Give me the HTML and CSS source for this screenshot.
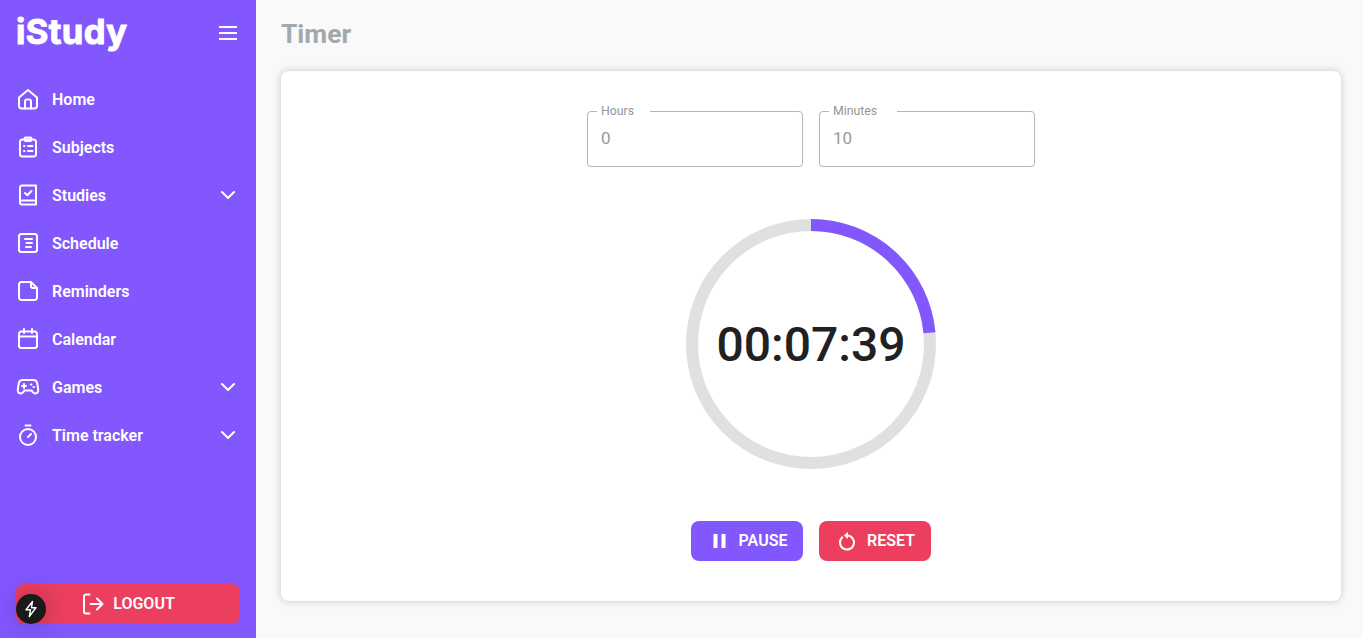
FILE: index.html
```html
<!DOCTYPE html>
<html lang="en">
<head>
    <meta charset="UTF-8">
    <meta name="viewport" content="width=device-width, initial-scale=1.0">
    <title>iStudy - Timer</title>
    <link rel="stylesheet" href="styles.css">
</head>
<body>
    <aside class="sidebar">
        <div class="brand">
            <span class="logo">iStudy</span>
            <button class="menu-btn" aria-label="Menu">
                <svg width="18" height="14" viewBox="0 0 18 14"><path d="M0 1h18M0 7h18M0 13h18"/></svg>
            </button>
        </div>

        <nav class="nav">
            <a class="nav-item">
                <svg class="nav-icon" viewBox="0 0 24 24"><path d="M3 10.500 12 3l9 7.500V19a2.500 2.500 0 0 1-2.500 2.500h-13A2.500 2.500 0 0 1 3 19z"/><path d="M9 21.500V14.500a2 2 0 0 1 2-2h2a2 2 0 0 1 2 2v7"/></svg>
                <span>Home</span>
            </a>
            <a class="nav-item">
                <svg class="nav-icon" viewBox="0 0 24 24"><rect x="4" y="4.500" width="16" height="17" rx="2.500"/><rect x="8.500" y="2.500" width="7" height="3.500" rx="1.200"/><path d="M8 11h.5M12 11h4.500M8 16h.5M12 16h4.500"/></svg>
                <span>Subjects</span>
            </a>
            <a class="nav-item">
                <svg class="nav-icon" viewBox="0 0 24 24"><path d="M4 19V4.500A2 2 0 0 1 6 2.500h14v19H6a2 2 0 0 1-2-2.500zM4 17.500h16"/><path d="m9 10 2.300 2.200L15.500 8"/></svg>
                <span>Studies</span>
                <svg class="chevron" viewBox="0 0 14 8"><path d="m1 1 6 6 6-6"/></svg>
            </a>
            <a class="nav-item">
                <svg class="nav-icon" viewBox="0 0 24 24"><rect x="3" y="3" width="18" height="18" rx="2.500"/><path d="M9 8h7M10.500 12h5.500M10 16h5"/></svg>
                <span>Schedule</span>
            </a>
            <a class="nav-item">
                <svg class="nav-icon" viewBox="0 0 24 24"><path d="M5.500 3H15l6 6v9.500a2.500 2.500 0 0 1-2.500 2.500h-13A2.500 2.500 0 0 1 3 18.500v-13A2.500 2.500 0 0 1 5.500 3z"/><path d="M15 3v4a2 2 0 0 0 2 2h4"/></svg>
                <span>Reminders</span>
            </a>
            <a class="nav-item">
                <svg class="nav-icon" viewBox="0 0 24 24"><rect x="3" y="4.500" width="18" height="16.500" rx="2.500"/><path d="M3 9.500h18M8 2v4M16 2v4"/></svg>
                <span>Calendar</span>
            </a>
            <a class="nav-item">
                <svg class="nav-icon" viewBox="0 0 24 24"><path d="M6.500 5h11c2 0 3.300 1.200 3.700 3.200l1 6.300c.4 2.500-1 4-2.800 4-1.300 0-2-.6-2.800-1.700L15.500 15.500h-7L7.400 16.800C6.600 17.900 5.900 18.500 4.600 18.500c-1.800 0-3.200-1.500-2.800-4l1-6.300C3.200 6.200 4.500 5 6.500 5z"/><path d="M6 11h4M8 9v4M15 9.500h.5M17.500 12h.5"/></svg>
                <span>Games</span>
                <svg class="chevron" viewBox="0 0 14 8"><path d="m1 1 6 6 6-6"/></svg>
            </a>
            <a class="nav-item">
                <svg class="nav-icon" viewBox="0 0 24 24"><circle cx="12" cy="14" r="8"/><path d="M9.500 2.500h5M12 14l3-3"/></svg>
                <span>Time tracker</span>
                <svg class="chevron" viewBox="0 0 14 8"><path d="m1 1 6 6 6-6"/></svg>
            </a>
        </nav>

        <button class="btn btn-logout">
            <svg width="24" height="24" viewBox="0 0 24 24"><path d="M8.500 2.500H5a2 2 0 0 0-2 2v15a2 2 0 0 0 2 2h3.500M9.500 12h12M16 6.500l5.500 5.500-5.500 5.500"/></svg>
            <span class="btn-text">LOGOUT</span>
        </button>
    </aside>

    <main class="content">
        <h1 class="page-title">Timer</h1>
        <section class="card">
            <div class="fields">
                <fieldset class="field">
                    <legend class="field-label label-hours">Hours</legend>
                    <input class="field-input" type="text" value="0">
                </fieldset>
                <fieldset class="field">
                    <legend class="field-label label-minutes">Minutes</legend>
                    <input class="field-input" type="text" value="10">
                </fieldset>
            </div>

            <div class="ring">
                <svg width="250" height="250" viewBox="0 0 250 250">
                    <circle class="ring-track" cx="125" cy="125" r="119"/>
                    <circle class="ring-value" cx="125" cy="125" r="119" pathLength="600" stroke-dasharray="141 459" transform="rotate(-90 125 125)"/>
                </svg>
                <span class="ring-time">00:07:39</span>
            </div>

            <div class="actions">
                <button class="btn btn-pause">
                    <svg width="24" height="24" viewBox="0 0 24 24"><path class="solid" d="M6.500 5h4v14h-4zM14.500 5h4v14h-4z"/></svg>
                    <span class="btn-text">PAUSE</span>
                </button>
                <button class="btn btn-reset">
                    <svg width="24" height="24" viewBox="0 0 24 24"><path d="M7.300 8.300A7 7 0 1 0 12 6.500"/><path class="solid" d="M13 3v7L8.800 6.500z"/></svg>
                    <span class="btn-text">RESET</span>
                </button>
            </div>
        </section>
    </main>

    <!-- floating dev badge -->
    <div class="dev-badge">
        <svg width="18" height="18" viewBox="0 0 18 18"><path d="M10.500 1.500 4 9.800h4.500l-1.200 6.700 6.700-8.800H9.500z"/></svg>
    </div>
</body>
</html>
```

FILE: styles.css
```css
* {
    margin: 0;
    padding: 0;
    box-sizing: border-box;
}
body {
    display: flex;
    height: 100vh;
    overflow: hidden;
    background: #f9f9f9;
    font-family: Roboto, "Liberation Sans", sans-serif;
    color: #212121;
}
button {
    font-family: inherit;
    border: none;
    cursor: pointer;
}
svg path, svg rect, svg circle {
    fill: none;
    stroke: currentColor;
    stroke-width: 2;
    stroke-linecap: round;
    stroke-linejoin: round;
}
svg .solid {
    fill: currentColor;
    stroke: none;
}

/* Sidebar */
.sidebar {
    width: 256px;
    flex-shrink: 0;
    display: flex;
    flex-direction: column;
    padding: 0 16px 14px;
    background: #8257fe;
    color: #fff;
}
.brand {
    display: flex;
    align-items: center;
    justify-content: space-between;
    height: 75px;
    padding-bottom: 9px;
}
.logo {
    margin-bottom: 3px;
    font-family: Inter, Roboto, sans-serif;
    font-size: 34.5px;
    font-weight: 700;
    line-height: 44px;
    letter-spacing: 0.4px;
    -webkit-text-stroke: 1px #fff;
}
.menu-btn {
    display: flex;
    margin-right: 3px;
    background: none;
    color: #fff;
}
.nav {
    flex: 1;
    display: flex;
    flex-direction: column;
}
.nav-item {
    display: flex;
    align-items: center;
    height: 48px;
    font-size: 16px;
    font-weight: 600;
}
.nav-icon {
    width: 24px;
    height: 24px;
    margin-right: 12px;
}
.chevron {
    width: 14px;
    height: 8px;
    margin-left: auto;
    margin-right: 5px;
}

/* Buttons */
.btn {
    display: flex;
    align-items: center;
    justify-content: center;
    gap: 8px;
    height: 40px;
    border-radius: 8px;
    color: #fff;
    font-size: 16px;
    font-weight: 600;
}
.btn-text {
    margin-bottom: 2px;
}
.btn-logout {
    background: #ec3f5f;
}
.btn-pause {
    width: 112px;
    background: #8257fe;
}
.btn-reset {
    width: 112px;
    background: #ec3f5f;
}

/* Main */
.content {
    flex: 1;
    display: flex;
    flex-direction: column;
    padding: 0 22px 37px 25px;
}
.page-title {
    height: 71px;
    padding-top: 16px;
    font-size: 26.4px;
    line-height: 36px;
    font-weight: 700;
    color: #a1a9ac;
}
.card {
    flex: 1;
    display: flex;
    flex-direction: column;
    align-items: center;
    padding-top: 33px;
    border-radius: 8px;
    background: #fff;
    box-shadow: 0 0 8px rgba(0, 0, 0, 0.2);
}
.fields {
    display: flex;
    gap: 16px;
}
.field {
    width: 216px;
    height: 63px;
    padding: 0 13px;
    border: 1px solid #b5b5b5;
    border-radius: 4px;
}
.field-label {
    height: 14px;
    margin-left: -4px;
    padding: 0 16px 0 4px;
    font-size: 12.3px;
    line-height: 14px;
    color: #969696;
}
.label-minutes {
    padding-right: 20px;
}
.field-input {
    width: 100%;
    height: 40px;
    border: none;
    outline: none;
    background: none;
    font-family: inherit;
    font-size: 17px;
    color: #9a9a9a;
}
.ring {
    position: relative;
    display: flex;
    align-items: center;
    justify-content: center;
    width: 250px;
    height: 250px;
    margin-top: 52px;
}
.ring svg {
    position: absolute;
    inset: 0;
}
.ring-track {
    stroke: #e0e0e0;
    stroke-width: 12;
}
.ring-value {
    stroke: #8257fe;
    stroke-width: 12;
    stroke-linecap: butt;
}
.ring-time {
    position: relative;
    font-size: 48px;
    font-weight: 500;
}
.actions {
    display: flex;
    gap: 16px;
    margin-top: 52px;
}

/* Dev badge */
.dev-badge {
    position: fixed;
    left: 16px;
    bottom: 14px;
    display: flex;
    align-items: center;
    justify-content: center;
    width: 30px;
    height: 30px;
    border-radius: 50%;
    background: #1a1a1a;
    color: #fff;
    box-shadow: 0 0 24px rgba(0, 0, 0, 0.25);
}
.dev-badge svg path {
    stroke-width: 1.4;
}
```
